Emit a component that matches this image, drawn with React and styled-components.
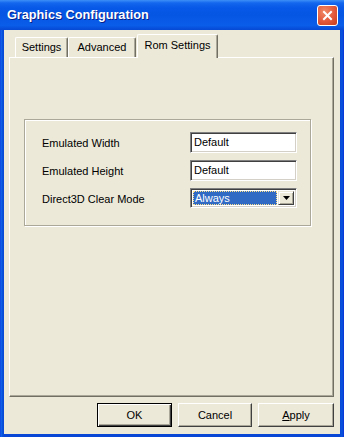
import styled, { createGlobalStyle } from "styled-components";

const GlobalStyle = createGlobalStyle`
  html, body {
    margin: 0;
    padding: 0;
    background: #ece9d8;
  }
  body {
    font-family: "Liberation Sans", Arial, sans-serif;
    font-size: 11px;
    color: #000;
  }
`;

const Window = styled.div`
  width: 344px;
  height: 437px;
  box-sizing: border-box;
  display: flex;
  flex-direction: column;
  background: linear-gradient(to right, #0831d9 0, #166aee 1px, #0855dd 2px, #0847d6 4px, #0847d6 340px, #0855dd 342px, #0831d9 344px);
  padding: 0 4px 3px 4px;
`;

const TitleBar = styled.div`
  height: 30px;
  margin: 0 -4px;
  padding: 0 6px 0 7px;
  display: flex;
  align-items: center;
  justify-content: space-between;
  background: linear-gradient(180deg, #3d8ff7 0, #1366ee 3px, #0758e6 8px, #0656e4 50%, #0a5de9 85%, #0649d4 100%);
`;

const Title = styled.span`
  color: #fff;
  font-weight: bold;
  font-size: 12.7px;
  text-shadow: 1px 1px 0 #0a1f8a;
  letter-spacing: 0;
`;

const CloseButton = styled.div`
  width: 21px;
  height: 21px;
  box-sizing: border-box;
  border: 1px solid #fff;
  border-radius: 3px;
  background: radial-gradient(circle at 35% 30%, #f08a66 0, #e2583a 55%, #c53d1c 100%);
  display: flex;
  align-items: center;
  justify-content: center;
  margin-top: 1px;
`;

const Client = styled.div`
  flex: 1;
  background: #ece9d8;
  display: flex;
  flex-direction: column;
  padding: 4px 6px 7px 5px;
`;

const TabStrip = styled.div`
  display: flex;
  align-items: flex-end;
  height: 23px;
  padding-left: 6px;
`;

const Tab = styled.div`
  box-sizing: border-box;
  width: ${(p) => p.w}px;
  height: ${(p) => (p.active ? 24 : 20)}px;
  margin-left: ${(p) => p.ml || 0}px;
  margin-bottom: ${(p) => (p.active ? -1 : 0)}px;
  position: relative;
  z-index: ${(p) => (p.active ? 1 : 0)};
  background: #ece9d8;
  border-top: 1px solid #fff;
  border-left: 1px solid #fff;
  border-right: 1px solid #716f64;
  border-radius: 2px 2px 0 0;
  box-shadow: inset -1px 0 0 #aca899;
  display: flex;
  justify-content: center;
  padding-top: ${(p) => (p.active ? 4 : 3)}px;
  font-size: 11px;
  white-space: nowrap;
`;

const Panel = styled.div`
  flex: 1;
  box-sizing: border-box;
  border: 1px solid;
  border-color: #fff #716f64 #716f64 #fff;
  box-shadow: inset -1px -1px 0 #aca899;
  padding: 61px 0 0 14px;
`;

const GroupBox = styled.div`
  width: 287px;
  height: 107px;
  box-sizing: border-box;
  border: 1px solid #aca899;
  box-shadow: inset 1px 1px 0 #fff, 1px 1px 0 #fff;
  display: grid;
  grid-template-columns: 148px 107px;
  grid-auto-rows: 21px;
  row-gap: 7px;
  align-content: start;
  padding: 12px 0 0 17px;
`;

const Label = styled.div`
  display: flex;
  align-items: center;
  padding-top: 1px;
`;

const TextBox = styled.div`
  box-sizing: border-box;
  height: 21px;
  background: #fff;
  border: 1px solid;
  border-color: #808080 #fff #fff #808080;
  box-shadow: inset 1px 1px 0 #404040, inset -1px -1px 0 #d4d0c8;
  padding: 3px 0 0 3px;
`;

const Select = styled.div`
  box-sizing: border-box;
  height: 20px;
  background: #fff;
  border: 1px solid;
  border-color: #808080 #fff #fff #808080;
  box-shadow: inset 1px 1px 0 #404040, inset -1px -1px 0 #d4d0c8;
  padding: 2px;
  display: flex;
`;

const Selected = styled.div`
  flex: 1;
  background: #316ac5;
  color: #fff;
  outline: 1px dotted #ffe08a;
  outline-offset: -1px;
  padding: 1px 0 0 2px;
  margin-right: 1px;
`;

const ArrowButton = styled.div`
  width: 16px;
  box-sizing: border-box;
  background: #ece9d8;
  border: 1px solid;
  border-color: #ece9d8 #404040 #404040 #ece9d8;
  box-shadow: inset 1px 1px 0 #fff, inset -1px -1px 0 #aca899;
  display: flex;
  align-items: center;
  justify-content: center;
`;

const ButtonRow = styled.div`
  display: flex;
  justify-content: flex-end;
  gap: 6px;
  padding-top: 6px;
  padding-right: 0;
`;

const Button = styled.div`
  width: ${(p) => p.w}px;
  height: 24px;
  box-sizing: border-box;
  background: #ece9d8;
  border: 1px solid;
  border-color: ${(p) => (p.primary ? "#000" : "#fff #404040 #404040 #fff")};
  box-shadow: ${(p) =>
    p.primary
      ? "inset 1px 1px 0 #fff, inset -1px -1px 0 #404040, inset -2px -2px 0 #aca899"
      : "inset -1px -1px 0 #aca899"};
  display: flex;
  align-items: center;
  justify-content: center;
  font-size: 11px;
  u {
    text-decoration: underline;
  }
`;

export default function App() {
  return (
    <>
      <GlobalStyle />
      <Window>
        <TitleBar>
          <Title>Graphics Configuration</Title>
          <CloseButton>
            <svg width="11" height="11" viewBox="0 0 11 11">
              <path d="M2 2 L9 9 M9 2 L2 9" stroke="#fff" strokeWidth="2" strokeLinecap="square" />
            </svg>
          </CloseButton>
        </TitleBar>
        <Client>
          <TabStrip>
            <Tab w={53}>Settings</Tab>
            <Tab w={68}>Advanced</Tab>
            <Tab w={81} ml={1} active>
              Rom Settings
            </Tab>
          </TabStrip>
          <Panel>
            <GroupBox>
              <Label>Emulated Width</Label>
              <TextBox>Default</TextBox>
              <Label>Emulated Height</Label>
              <TextBox>Default</TextBox>
              <Label>Direct3D Clear Mode</Label>
              <Select>
                <Selected>Always</Selected>
                <ArrowButton>
                  <svg width="7" height="4" viewBox="0 0 7 4">
                    <path d="M0 0 H7 L3.5 4 Z" fill="#000" />
                  </svg>
                </ArrowButton>
              </Select>
            </GroupBox>
          </Panel>
          <ButtonRow>
            <Button w={75} primary>OK</Button>
            <Button w={74}>Cancel</Button>
            <Button w={76}>
              <span>
                <u>A</u>pply
              </span>
            </Button>
          </ButtonRow>
        </Client>
      </Window>
    </>
  );
}
